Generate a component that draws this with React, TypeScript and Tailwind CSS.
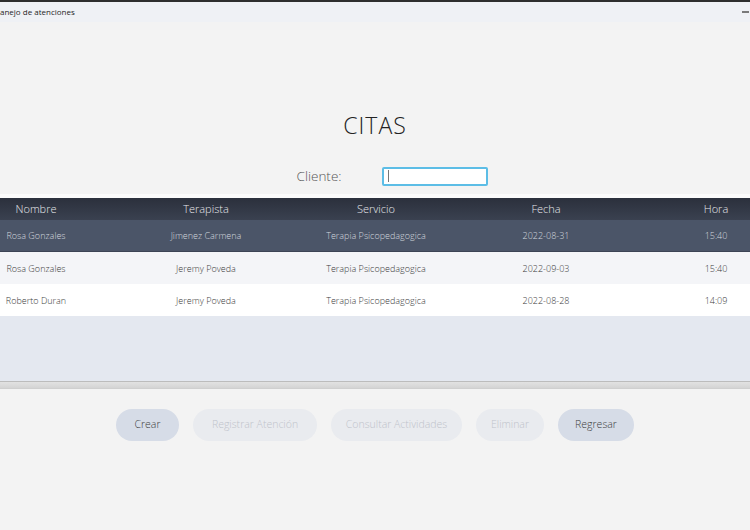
import React from "react";

type Cita = {
  nombre: string;
  terapista: string;
  servicio: string;
  fecha: string;
  hora: string;
};

const CITAS: Cita[] = [
  { nombre: "Rosa Gonzales", terapista: "Jimenez Carmena", servicio: "Terapia Psicopedagogica", fecha: "2022-08-31", hora: "15:40" },
  { nombre: "Rosa Gonzales", terapista: "Jeremy Poveda", servicio: "Terapia Psicopedagogica", fecha: "2022-09-03", hora: "15:40" },
  { nombre: "Roberto Duran", terapista: "Jeremy Poveda", servicio: "Terapia Psicopedagogica", fecha: "2022-08-28", hora: "14:09" },
];

const HEADERS = ["Nombre", "Terapista", "Servicio", "Fecha", "Hora"];

const BUTTONS: { label: string; enabled: boolean; width: string }[] = [
  { label: "Crear", enabled: true, width: "w-[63px]" },
  { label: "Registrar Atención", enabled: false, width: "w-[124px]" },
  { label: "Consultar Actividades", enabled: false, width: "w-[131px]" },
  { label: "Eliminar", enabled: false, width: "w-[68px]" },
  { label: "Regresar", enabled: true, width: "w-[76px]" },
];

export default function App() {
  return (
    <div
      className="w-[750px] h-[530px] overflow-hidden bg-[#f3f3f3] flex flex-col"
      style={{ fontFamily: '"Open Sans", "Noto Sans", sans-serif' }}
    >
      {/* Title bar */}
      <div className="h-[2px] bg-[#2e2e2e]" />
      <div className="h-[20px] bg-[#eff1f5] flex items-center justify-between">
        <span className="text-[8px] text-[#1f1f1f] leading-none pb-[1px]">anejo de atenciones</span>
        <span className="w-[7px] h-[1.5px] bg-[#7a7a7a] mr-[1px]" />
      </div>

      {/* Heading + filter */}
      <div className="h-[172px] flex flex-col items-center">
        <h1 className="mt-[92px] text-[23px] font-light tracking-[1px] text-[#222] leading-none">CITAS</h1>
        <div className="mt-[29px] flex items-center ml-[34px]">
          <span className="text-[13.5px] font-light text-[#555] w-[85px]">Cliente:</span>
          <div className="w-[106px] h-[19px] bg-white border-2 border-[#5cbde6] rounded-[2px] flex items-center pl-[4px]">
            <span className="w-[1.5px] h-[12px] bg-[#777]" />
          </div>
        </div>
      </div>

      {/* Table */}
      <div className="h-[4px] bg-[#fbfbfb]" />
      <div className="overflow-hidden">
        <div className="w-[850px] ml-[-49px]">
          <div className="h-[22px] flex items-center bg-gradient-to-b from-[#2b303c] to-[#3a4150]">
            {HEADERS.map((h) => (
              <div key={h} className="w-[170px] text-center text-[11px] font-light text-[#e6e8ec]">
                {h}
              </div>
            ))}
          </div>
          {CITAS.map((c, i) => (
            <div
              key={i}
              className={`h-[32px] flex items-center text-[9px] font-light pt-[1px] ${
                i === 0
                  ? "bg-[#4b5568] text-[#d3d7df] border-b border-[#3c4455]"
                  : i === 1
                  ? "bg-[#f4f5f8] text-[#3a3a3a]"
                  : "bg-white text-[#3a3a3a]"
              }`}
            >
              <div className="w-[170px] text-center">{c.nombre}</div>
              <div className="w-[170px] text-center">{c.terapista}</div>
              <div className="w-[170px] text-center">{c.servicio}</div>
              <div className="w-[170px] text-center">{c.fecha}</div>
              <div className="w-[170px] text-center">{c.hora}</div>
            </div>
          ))}
        </div>
      </div>
      <div className="h-[65px] bg-[#e4e8f0]" />
      <div className="h-[1px] bg-[#bcbcbc]" />
      <div className="h-[6px] bg-gradient-to-b from-[#e2e2e2] to-[#d4d4d4]" />
      <div className="h-[1px] bg-[#cfcfcf]" />

      {/* Actions */}
      <div className="flex justify-center gap-[14px] mt-[20px]">
        {BUTTONS.map((b) => (
          <button
            key={b.label}
            className={`${b.width} h-[32px] rounded-full text-[10.5px] font-light ${
              b.enabled ? "bg-[#d6dce7] text-[#3d3d3d]" : "bg-[#e9ebef] text-[#bfc3cb]"
            }`}
          >
            {b.label}
          </button>
        ))}
      </div>
    </div>
  );
}
